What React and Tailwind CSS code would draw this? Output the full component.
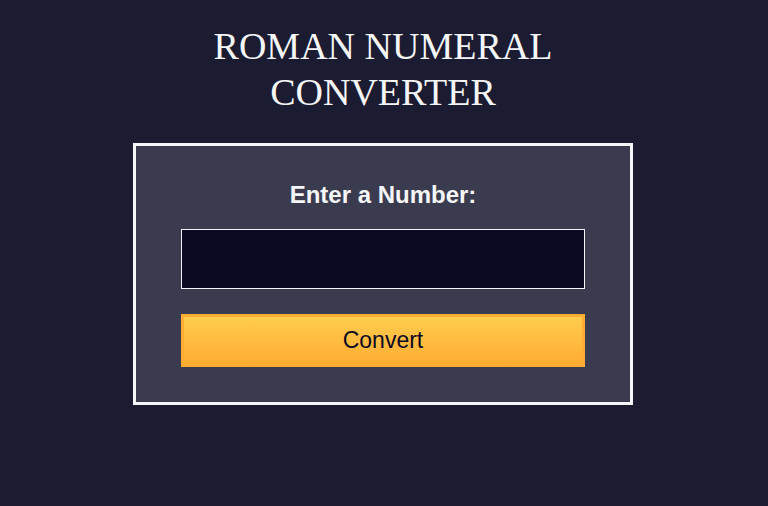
import { useState } from "react";

const App = () => {
  const [value, setValue] = useState("");

  return (
    <div className="min-h-screen w-full bg-[#1b1b32] flex flex-col items-center pr-[2px]">
      {/* TITLE */}
      <h1 className="mt-[23px] text-center text-[38px] leading-[46px] text-[#f5f6f7] font-['Liberation_Serif',serif]">
        ROMAN NUMERAL
        <br />
        CONVERTER
      </h1>

      {/* FORM */}
      <form
        onSubmit={(e) => e.preventDefault()}
        className="mt-[28px] w-[500px] border-[3px] border-[#f5f6f7] bg-[#3b3b4f] px-[45px] pt-[35px] pb-[35px] flex flex-col font-['Liberation_Sans',Arial,sans-serif]"
      >
        <label
          htmlFor="number"
          className="block h-[28px] text-center text-[24px] leading-[28px] font-bold text-[#f5f6f7]"
        >
          Enter a Number:
        </label>
        <input
          id="number"
          type="number"
          value={value}
          onChange={(e) => setValue(e.target.value)}
          className="mt-[20px] h-[60px] w-full border border-[#f5f6f7] bg-[#0a0a23] px-2 text-[24px] text-[#f5f6f7] outline-none"
        />
        <button
          type="submit"
          className="mt-[25px] h-[53px] w-full border-[3px] border-[#feac32] bg-gradient-to-b from-[#fecc4c] to-[#ffac33] text-[23px] text-[#0a0a23]"
        >
          Convert
        </button>
      </form>
    </div>
  );
};

export default App;
